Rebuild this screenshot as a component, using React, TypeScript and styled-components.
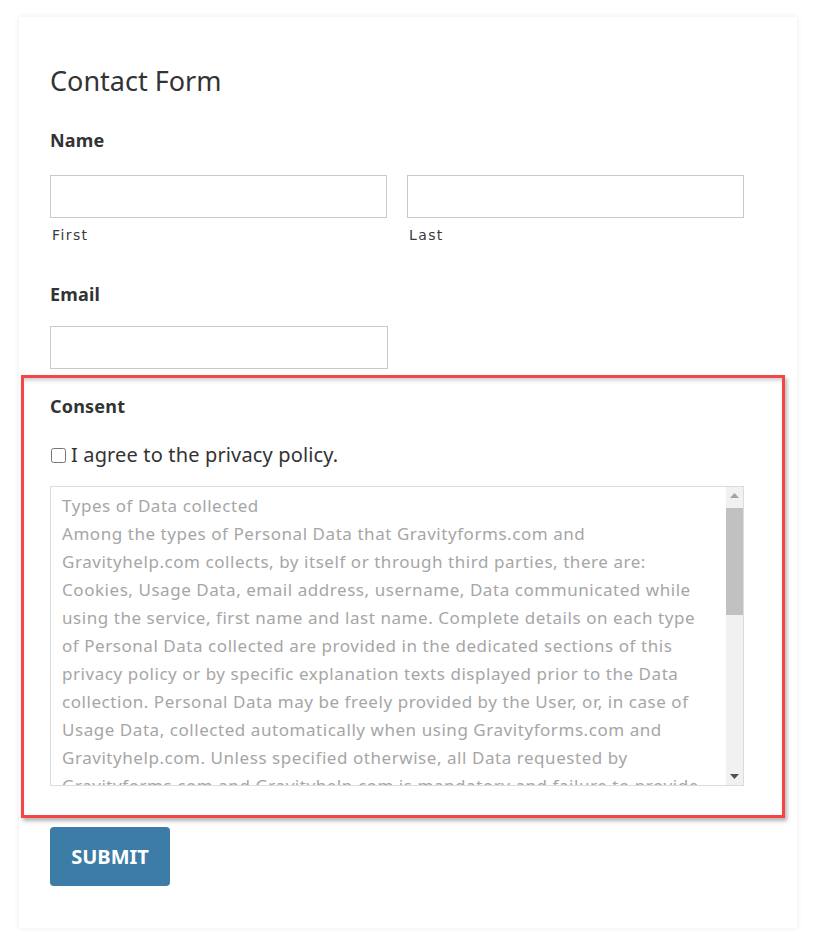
import React from 'react';
import styled, { createGlobalStyle } from 'styled-components';

const GlobalStyle = createGlobalStyle`
  html, body {
    margin: 0;
    padding: 0;
    background: #ffffff;
  }
  * {
    box-sizing: border-box;
  }
`;

const Page = styled.div`
  padding: 17px 21px 15px 19px;
`;

const Card = styled.form`
  width: 778px;
  background: #ffffff;
  box-shadow: 0 0 6px rgba(0, 0, 0, 0.08);
  padding: 48px 53px 42px 31px;
  font-family: 'Noto Sans', 'Open Sans', sans-serif;
  color: #333333;
`;

const Title = styled.h2`
  margin: 0;
  font-size: 27px;
  line-height: 32px;
  font-weight: 400;
  color: #333333;
`;

const Field = styled.div<{ $top: number }>`
  margin-top: ${(p) => p.$top}px;
`;

const Label = styled.div<{ $gap: number }>`
  font-size: 18px;
  line-height: 22px;
  font-weight: 700;
  letter-spacing: 0.2px;
  color: #333333;
  margin-bottom: ${(p) => p.$gap}px;
`;

const NameRow = styled.div`
  display: grid;
  grid-template-columns: 1fr 1fr;
  column-gap: 20px;
`;

const TextInput = styled.input<{ $width?: number }>`
  display: block;
  width: ${(p) => (p.$width ? `${p.$width}px` : '100%')};
  height: 43px;
  margin: 0;
  border: 1px solid #c9c9c9;
  border-radius: 0;
  background: #ffffff;
  font-family: inherit;
  font-size: 16px;
  padding: 0 10px;
  outline: none;
`;

const SubLabel = styled.label`
  display: block;
  margin-top: 8px;
  padding-left: 2px;
  font-family: 'DejaVu Sans', Verdana, sans-serif;
  font-size: 14px;
  line-height: 18px;
  letter-spacing: 1.4px;
  color: #3a3a3a;
`;

const Highlight = styled.div`
  margin: 6px -41px 0 -29px;
  padding: 17px 38px 29px 26px;
  border: 3px solid #f44646;
  box-shadow: 2px 3px 4px rgba(0, 0, 0, 0.3), inset 0 4px 4px -2px rgba(0, 0, 0, 0.22);
`;

const CheckRow = styled.label`
  display: flex;
  align-items: center;
  gap: 5px;
  margin-top: 25px;
  font-size: 20px;
  line-height: 26px;
  letter-spacing: 0.15px;
  color: #333333;
`;

const Check = styled.input`
  width: 15px;
  height: 15px;
  margin: 0 0 0 1px;
`;

const PolicyFrame = styled.div`
  display: flex;
  height: 300px;
  margin-top: 18px;
  border: 1px solid #dcdcdc;
  background: #ffffff;
`;

const PolicyText = styled.textarea`
  flex: 1;
  min-width: 0;
  height: 100%;
  margin: 0;
  padding: 5px 14px 5px 11px;
  border: none;
  border-radius: 0;
  resize: none;
  outline: none;
  background: #ffffff;
  font-family: 'Noto Sans', 'Open Sans', sans-serif;
  font-size: 17px;
  line-height: 28px;
  letter-spacing: 0.55px;
  color: #a6a6a6;
  overflow-y: scroll;
  scrollbar-width: none;
`;

const ScrollTrack = styled.div`
  width: 17px;
  flex: none;
  display: flex;
  flex-direction: column;
  background: #f1f1f1;
`;

const ScrollArrow = styled.div`
  height: 17px;
  display: flex;
  align-items: center;
  justify-content: center;
`;

const ScrollThumb = styled.div`
  height: 107px;
  margin-top: 4px;
  background: #c1c1c1;
`;

const ScrollSpacer = styled.div`
  flex: 1;
`;

const SubmitButton = styled.button`
  display: block;
  width: 120px;
  height: 59px;
  margin-top: 9px;
  border: none;
  border-radius: 4px;
  background: #3d7ca6;
  color: #ffffff;
  font-family: 'Noto Sans', 'Open Sans', sans-serif;
  font-size: 20px;
  font-weight: 700;
  cursor: pointer;
`;

const policyText = `Types of Data collected
Among the types of Personal Data that Gravityforms.com and Gravityhelp.com collects, by itself or through third parties, there are: Cookies, Usage Data, email address, username, Data communicated while using the service, first name and last name. Complete details on each type of Personal Data collected are provided in the dedicated sections of this privacy policy or by specific explanation texts displayed prior to the Data collection. Personal Data may be freely provided by the User, or, in case of Usage Data, collected automatically when using Gravityforms.com and Gravityhelp.com. Unless specified otherwise, all Data requested by Gravityforms.com and Gravityhelp.com is mandatory and failure to provide this Data may make it impossible for Gravityforms.com and Gravityhelp.com to provide its services. In cases where Gravityforms.com and Gravityhelp.com specifically states that some Data is not mandatory, Users are free not to communicate this Data without consequences to the availability or the functioning of the Service. Users who are uncertain about which Personal Data is mandatory are welcome to contact the Owner. Any use of Cookies – or of other tracking tools – by Gravityforms.com and Gravityhelp.com or by the owners of third-party services used by Gravityforms.com and Gravityhelp.com serves the purpose of providing the Service required by the User, in addition to any other purposes described in the present document and in the Cookie Policy, if available. Users are responsible for any third-party Personal Data obtained, published or shared through Gravityforms.com and Gravityhelp.com and confirm that they have the third party's consent to provide the Data to the Owner.
Mode and place of processing the Data
Methods of processing
The Owner takes appropriate security measures to prevent unauthorized access, disclosure, modification, or unauthorized destruction of the Data. The Data processing is carried out using computers and/or IT enabled tools, following organizational procedures and modes strictly related to the purposes indicated.`;

const ArrowUp = () => (
  <svg width="9" height="5" viewBox="0 0 9 5">
    <path d="M0 5 L4.5 0 L9 5 Z" fill="#a3a3a3" />
  </svg>
);

const ArrowDown = () => (
  <svg width="9" height="5" viewBox="0 0 9 5">
    <path d="M0 0 L9 0 L4.5 5 Z" fill="#505050" />
  </svg>
);

const App = () => {
  return (
    <Page>
      <GlobalStyle />
      <Card onSubmit={(e) => e.preventDefault()}>
        <Title>Contact Form</Title>

        <Field $top={32}>
          <Label $gap={24}>Name</Label>
          <NameRow>
            <div>
              <TextInput type="text" aria-label="First" />
              <SubLabel>First</SubLabel>
            </div>
            <div>
              <TextInput type="text" aria-label="Last" />
              <SubLabel>Last</SubLabel>
            </div>
          </NameRow>
        </Field>

        <Field $top={39}>
          <Label $gap={21}>Email</Label>
          <TextInput type="email" $width={338} aria-label="Email" />
        </Field>

        <Highlight>
          <Label $gap={0}>Consent</Label>
          <CheckRow>
            <Check type="checkbox" />
            I agree to the privacy policy.
          </CheckRow>
          <PolicyFrame>
            <PolicyText readOnly defaultValue={policyText} />
            <ScrollTrack>
              <ScrollArrow>
                <ArrowUp />
              </ScrollArrow>
              <ScrollThumb />
              <ScrollSpacer />
              <ScrollArrow>
                <ArrowDown />
              </ScrollArrow>
            </ScrollTrack>
          </PolicyFrame>
        </Highlight>

        <SubmitButton type="submit">SUBMIT</SubmitButton>
      </Card>
    </Page>
  );
};

export default App;
